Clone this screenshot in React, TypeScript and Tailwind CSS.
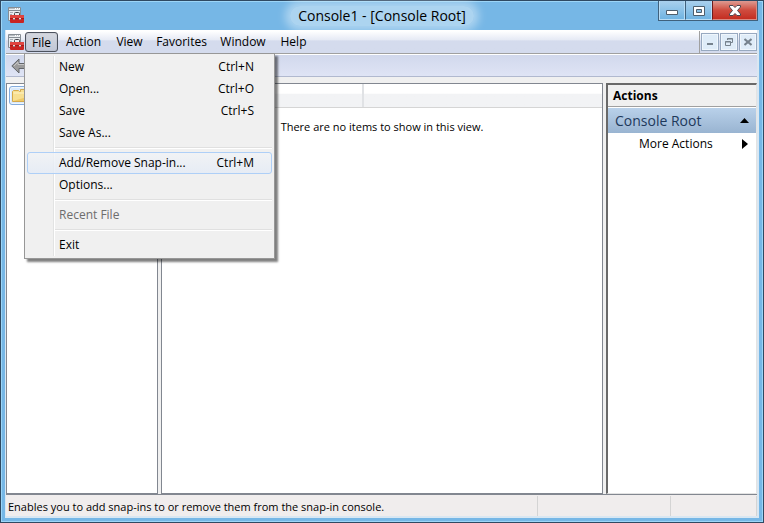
import type { ReactNode } from "react";

const menus: { label: string; width: string }[] = [
  { label: "Action", width: "w-[51px]" },
  { label: "View", width: "w-[41px]" },
  { label: "Favorites", width: "w-[63px]" },
  { label: "Window", width: "w-[60px]" },
  { label: "Help", width: "w-[41px]" },
];

function ConsoleIcon() {
  return (
    <svg width="16" height="16" viewBox="0 0 16 16" className="block shrink-0" aria-hidden="true">
      <path d="M.5 .5h12v13H.5z" fill="#e9edf0" stroke="#858d94" />
      <path d="M1 1.500h11" stroke="#b4bbc1" />
      <path d="M7 1.500h1M9 1.500h1M11 1.500h1" stroke="#fff" />
      <path d="M1 3.500h11" stroke="#858d94" />
      <path d="M2 5.500h3M2 7.500h2M2 9.500h1" stroke="#a5adb5" />
      <path d="M6.500 8V6.500q0-1 1-1h3q1 0 1 1V8" fill="none" stroke="#45454c" />
      <path d="M2 9q0-1 1-1h12q1 0 1 1v6q0 1-1 1H3q-1 0-1-1z" fill="#c92422" />
      <path d="M2 9q0-1 1-1h12q1 0 1 1v2H2z" fill="#e0443f" />
      <path d="M2 11.500h14" stroke="#a31a1a" />
      <path d="M5 11.500h2M11 11.500h2" stroke="#e6d9d9" />
      <path d="M5 12.500h2M11 12.500h2" stroke="#9b7a7c" />
    </svg>
  );
}

function Shortcut({ children }: { children: ReactNode }) {
  return <span className="ml-auto">{children}</span>;
}

function MenuItem({ label, shortcut, active, disabled }: { label: string; shortcut?: string; active?: boolean; disabled?: boolean }) {
  return (
    <button
      type="button"
      role="menuitem"
      disabled={disabled}
      className={
        "relative flex h-[22px] w-full items-center rounded-[3px] border pr-[17px] pl-[31px] text-left " +
        (active ? "border-[#aecff7] bg-gradient-to-b from-[#f1f3f6]/80 to-[#e4ebf6]/80 " : "border-transparent ") +
        (disabled ? "text-[#6d6d6d]" : "text-black")
      }
    >
      <span>{label}</span>
      {shortcut && <Shortcut>{shortcut}</Shortcut>}
    </button>
  );
}

function Separator() {
  return (
    <div role="separator" className="flex h-2 flex-col justify-center pl-[28px]">
      <div className="h-[2px] border-b border-white bg-[#e0e0e0]" />
    </div>
  );
}

function FileMenu() {
  return (
    <div
      role="menu"
      aria-label="File"
      className="absolute top-[21px] -left-px z-10 w-[251px] border border-[#979797] bg-[#f0f0f0] p-[2px] shadow-[3px_3px_2px_rgba(0,0,0,0.5)]"
    >
      <div className="absolute inset-y-[2px] left-[28px] w-[2px] border-r border-white bg-[#e2e3e3]" />
      <MenuItem label="New" shortcut="Ctrl+N" />
      <MenuItem label="Open..." shortcut="Ctrl+O" />
      <MenuItem label="Save" shortcut="Ctrl+S" />
      <MenuItem label="Save As..." />
      <Separator />
      <MenuItem label="Add/Remove Snap-in..." shortcut="Ctrl+M" active />
      <MenuItem label="Options..." />
      <Separator />
      <MenuItem label="Recent File" disabled />
      <Separator />
      <MenuItem label="Exit" />
    </div>
  );
}

function TitleBar() {
  return (
    <header className="relative flex h-7 shrink-0 items-center justify-center">
      <div className="absolute top-[5px] left-[3px]">
        <ConsoleIcon />
      </div>
      <h1 className="rounded-full bg-white/40 px-2 text-[14px] leading-5 text-black shadow-[0_0_8px_5px_rgba(255,255,255,0.4)]">
        Console1 - [Console Root]
      </h1>
      <div className="absolute -top-px right-px flex h-5 border border-t-0 border-[#3f617d]">
        <button type="button" aria-label="Minimize" className="flex w-[26px] items-end justify-center border border-t-0 border-[#b9dcf4] bg-gradient-to-b from-[#a9d0ed] to-[#70b4e2] pb-1">
          <svg width="12" height="5" viewBox="0 0 12 5" aria-hidden="true"><path d="M.5 .5h11v4H.5z" fill="#fff" stroke="#4e5e6c" /></svg>
        </button>
        <button type="button" aria-label="Maximize" className="flex w-[27px] items-center justify-center border border-t-0 border-l-[#3f617d] border-[#b9dcf4] bg-gradient-to-b from-[#a9d0ed] to-[#70b4e2] pt-px">
          <svg width="12" height="10" viewBox="0 0 12 10" aria-hidden="true"><path d="M.5 .5h11v9H.5zM3.500 3.500v3h5v-3z" fill="#fff" fillRule="evenodd" stroke="#4e5e6c" /></svg>
        </button>
        <button type="button" aria-label="Close" className="flex w-[45px] items-center justify-center border border-t-0 border-[#d98b83] border-l-[#6d1c1c] bg-gradient-to-b from-[#dd9a92] via-[#cf4c3f] to-[#c42d20] pt-px">
          <svg width="12" height="11" viewBox="0 0 12 11" aria-hidden="true"><path d="M.5 .5h3.500L6 2.500 8 .5h3.500v1.500L8.500 5.500l3 3.500v1.500H8L6 8.500l-2 2H.5V9l3-3.500-3-3.500z" fill="#fff" stroke="#4b4650" /></svg>
        </button>
      </div>
    </header>
  );
}

const childButton = "flex h-[18px] w-[18px] items-center justify-center border border-[#98a9c0] bg-[#dfecf8] shadow-[inset_0_0_0_1px_#eff6fc]";

function MenuBar() {
  return (
    <nav aria-label="Main menu" className="flex h-6 shrink-0 border-t border-b border-t-white border-b-[#a0a0a0] bg-gradient-to-b from-white via-[#e6eaf5] via-40% to-[#d4dbed] to-45%">
      <div className="flex flex-1 pl-[2px]">
        <div className="mt-[3px] w-[17px] overflow-hidden"><ConsoleIcon /></div>
        <div className="relative mt-[1px]">
          <button type="button" aria-expanded="true" className="h-5 w-[33px] rounded-[3px] border border-[#4c525e] bg-gradient-to-b from-[#d5d8df] to-[#c0c7d7] pt-px leading-[17px] shadow-[inset_0_0_1px_#888]">
            File
          </button>
          <FileMenu />
        </div>
        {menus.map((m) => (
          <button key={m.label} type="button" className={"text-center " + m.width}>{m.label}</button>
        ))}
      </div>
      <div className="flex gap-px border-l border-[#a0a0a0] pt-[2px] pl-[1px]">
        <button type="button" aria-label="Minimize console" className={childButton}>
          <svg width="8" height="8" viewBox="0 0 8 8" aria-hidden="true"><path d="M1 6h6" stroke="#76828d" strokeWidth="2" /></svg>
        </button>
        <button type="button" aria-label="Restore console" className={childButton}>
          <svg width="8" height="8" viewBox="0 0 8 8" aria-hidden="true"><path d="M2.500 2V.5h5v4H6M2 1h6" fill="none" stroke="#76828d" /><path d="M.5 3.500h5v4h-5zM0 4h6" fill="none" stroke="#76828d" /></svg>
        </button>
        <button type="button" aria-label="Close console" className={childButton}>
          <svg width="8" height="8" viewBox="0 0 8 8" aria-hidden="true"><path d="M.5 1l7 6M7.500 1l-7 6" stroke="#76828d" strokeWidth="2" /></svg>
        </button>
      </div>
    </nav>
  );
}

function ToolBar() {
  return (
    <div role="toolbar" aria-label="Navigation" className="flex h-[23px] shrink-0 items-center border-t border-b border-t-white border-b-[#b1b9cf] bg-gradient-to-b from-[#d1d8ec] to-[#dfe4f5] pl-[5px]">
      <button type="button" aria-label="Back">
        <svg width="18" height="16" viewBox="0 0 18 16" className="block" aria-hidden="true">
          <path d="M.8 8L8 1v4.500h9v5H8V15z" fill="#9b9b9b" stroke="#62666b" />
          <path d="M3 8l4-4v2.500h9" fill="none" stroke="#c5c5c5" />
        </svg>
      </button>
    </div>
  );
}

function TreePane() {
  return (
    <section aria-label="Console tree" className="w-[152px] border border-[#828790] bg-white p-[2px]">
      <button type="button" aria-label="Console Root" className="flex h-[19px] w-full items-center rounded-[3px] border border-[#84acdd] bg-[#d9e9fb] pl-[2px] shadow-[inset_0_0_0_1px_#eef6fe]">
        <svg width="17" height="14" viewBox="0 0 17 14" aria-hidden="true">
          <path d="M.5 2.500l1-1h5l1 1h1v-2h6v2l1 1v9H.5z" fill="#f7df91" stroke="#d5a94a" />
          <path d="M1.500 4h13" stroke="#fff4c7" />
          <path d="M1 12h14V8z" fill="#efca69" />
        </svg>
      </button>
    </section>
  );
}

function ResultsPane() {
  return (
    <section aria-label="Results" className="flex-1 border border-[#828790] bg-white">
      <div className="flex h-6 border-b border-[#d5d5d5] bg-gradient-to-b from-white from-40% to-[#f2f3f5] to-45%">
        <div className="w-[202px] border-r-2 border-[#e0e2e5]" />
      </div>
      <p className="mt-[9px] text-center text-[11px] leading-5">There are no items to show in this view.</p>
    </section>
  );
}

function ActionsPane() {
  return (
    <aside aria-label="Actions" className="w-[151px] border-t-2 border-r border-b border-l-2 border-t-[#696969] border-r-[#e3e3e3] border-b-[#e3e3e3] border-l-[#696969] bg-white">
      <h2 className="h-[22px] border-b border-[#a0a0a0] bg-[#f0f0f0] pl-[5px] font-bold leading-[21px]">Actions</h2>
      <button type="button" className="flex h-[26px] w-full items-center justify-between border-t border-white bg-gradient-to-b from-[#b9d1ea] to-[#99b4d1] pr-[7px] pl-[7px] text-left text-[14px] text-[#1e395b]">
        Console Root
        <svg width="9" height="5" viewBox="0 0 9 5" aria-hidden="true"><path d="M0 5L4.500 0 9 5z" fill="#000" /></svg>
      </button>
      <button type="button" className="flex h-[22px] w-full items-center justify-between pr-2 pl-[31px] text-left">
        More Actions
        <svg width="6" height="10" viewBox="0 0 6 10" aria-hidden="true"><path d="M0 0l6 5-6 5z" fill="#000" /></svg>
      </button>
    </aside>
  );
}

export default function App() {
  return (
    <div className="flex h-screen flex-col border border-[#2f4962] bg-[#76b7e6] font-['Open_Sans','Noto_Sans',sans-serif] text-[12px] text-black">
      <div className="flex min-h-0 flex-1 flex-col border border-[#9cd5f7] px-[3px] pb-[3px]">
        <TitleBar />
        <div className="flex min-h-0 flex-1 flex-col border-r-2 border-b-2 border-l border-[#d9e7f2] bg-[#f0f0f0]">
          <MenuBar />
          <ToolBar />
          <main className="flex min-h-0 flex-1 pt-[6px]">
            <TreePane />
            <div className="w-[3px]" />
            <ResultsPane />
            <div className="w-[3px]" />
            <ActionsPane />
          </main>
          <footer className="flex h-[22px] shrink-0 border-t border-[#828790] bg-[#f0eded] pt-px text-[11px] leading-[22px]">
            <p className="flex-1 truncate pl-[2px]">Enables you to add snap-ins to or remove them from the snap-in console.</p>
            <div className="w-[133px] border-l border-[#d4d4d4]" />
            <div className="w-[87px] border-r border-l border-[#d4d4d4]" />
          </footer>
        </div>
      </div>
    </div>
  );
}
